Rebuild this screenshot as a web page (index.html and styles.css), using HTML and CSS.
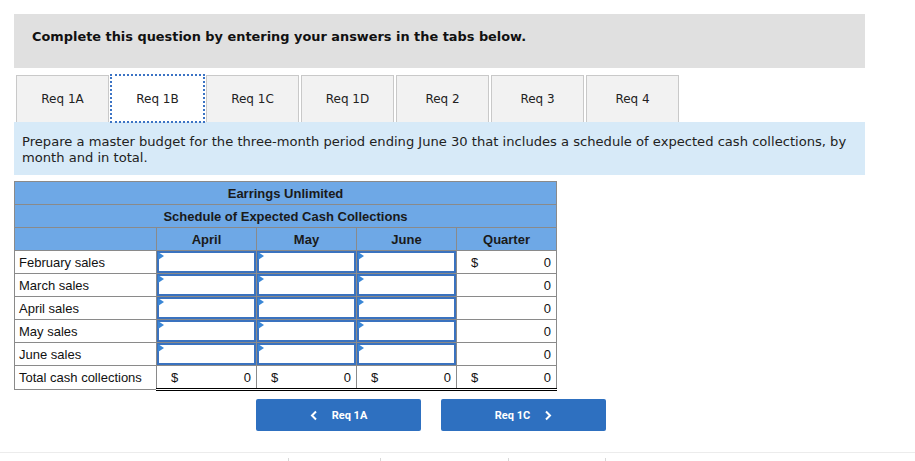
FILE: index.html
```html
<!DOCTYPE html>
<html>
<head>
<meta charset="utf-8">
<link rel="stylesheet" href="styles.css">
</head>
<body>
<div class="page">
  <div class="banner">Complete this question by entering your answers in the tabs below.</div>
  <div class="tabs">
    <div class="tab">Req 1A</div>
    <div class="tab active">Req 1B</div>
    <div class="tab">Req 1C</div>
    <div class="tab">Req 1D</div>
    <div class="tab">Req 2</div>
    <div class="tab">Req 3</div>
    <div class="tab">Req 4</div>
  </div>
  <div class="instr">Prepare a master budget for the three-month period ending June 30 that includes a schedule of expected cash collections, by month and in total.</div>
  <table class="sched">
    <colgroup><col class="c-label"><col class="c-num"><col class="c-num"><col class="c-num"><col class="c-num"></colgroup>
    <tr class="hd"><th colspan="5">Earrings Unlimited</th></tr>
    <tr class="hd"><th colspan="5">Schedule of Expected Cash Collections</th></tr>
    <tr class="hd"><th></th><th>April</th><th>May</th><th>June</th><th>Quarter</th></tr>
    <tr><td class="lbl">February sales</td><td class="in"><div class="box"></div></td><td class="in"><div class="box"></div></td><td class="in"><div class="box"></div></td><td class="val"><span class="dol">$</span><span>0</span></td></tr>
    <tr><td class="lbl">March sales</td><td class="in"><div class="box"></div></td><td class="in"><div class="box"></div></td><td class="in"><div class="box"></div></td><td class="val"><span></span><span>0</span></td></tr>
    <tr><td class="lbl">April sales</td><td class="in"><div class="box"></div></td><td class="in"><div class="box"></div></td><td class="in"><div class="box"></div></td><td class="val"><span></span><span>0</span></td></tr>
    <tr><td class="lbl">May sales</td><td class="in"><div class="box"></div></td><td class="in"><div class="box"></div></td><td class="in"><div class="box"></div></td><td class="val"><span></span><span>0</span></td></tr>
    <tr><td class="lbl">June sales</td><td class="in"><div class="box"></div></td><td class="in"><div class="box"></div></td><td class="in"><div class="box"></div></td><td class="val"><span></span><span>0</span></td></tr>
    <tr class="total"><td class="lbl">Total cash collections</td><td class="val"><span class="dol">$</span><span>0</span></td><td class="val"><span class="dol">$</span><span>0</span></td><td class="val"><span class="dol">$</span><span>0</span></td><td class="val"><span class="dol">$</span><span>0</span></td></tr>
  </table>
  <div class="nav">
    <div class="btn"><svg class="chev" width="8" height="11" viewBox="0 0 8 11"><path d="M6 1.5 L2 5.5 L6 9.5" fill="none" stroke="#fff" stroke-width="2"/></svg><span>Req 1A</span></div>
    <div class="btn"><span>Req 1C</span><svg class="chev" width="8" height="11" viewBox="0 0 8 11"><path d="M2 1.5 L6 5.5 L2 9.5" fill="none" stroke="#fff" stroke-width="2"/></svg></div>
  </div>
</div>
<div class="footer">
  <div class="seg s1"></div><div class="seg s2"></div><div class="seg s3"></div><div class="seg s4"></div><div class="seg s5"></div>
</div>
</body>
</html>
```
FILE: styles.css
```css
html, body { margin: 0; padding: 0; background: #fff; }
body { width: 915px; height: 461px; overflow: hidden; }
.page { padding: 14px 50px 0 14px; }
.banner {
  width: 851px; height: 54px; box-sizing: border-box;
  background: #e0e0e0;
  font-family: "DejaVu Sans", Verdana, sans-serif;
  font-weight: bold; font-size: 12.9px; color: #111;
  padding: 15px 18px 0;
  line-height: 16px;
}
.tabs { display: flex; gap: 2px; margin-top: 7px; padding-left: 2px; height: 47px; }
.tab {
  width: 93px; height: 47px; box-sizing: border-box;
  border: 1px solid #c9c9c9; border-bottom: none;
  background: #f2f2f2;
  font-family: "DejaVu Sans", Verdana, sans-serif; font-size: 12px; color: #222;
  display: flex; align-items: center; justify-content: center;
}
.tab.active { background: #fff; outline: 2px dotted #3b73c4; outline-offset: -1px; border-color: #fff; }
.instr {
  width: 851px; box-sizing: border-box; height: 53px;
  background: #d7eaf8;
  font-family: "DejaVu Sans", Verdana, sans-serif; font-size: 13.1px; color: #222;
  padding: 12px 4px 0 8px; line-height: 16px;
}
.sched {
  margin-top: 6px;
  border-collapse: collapse;
  font-family: "Liberation Sans", Arial, sans-serif; font-size: 13px; color: #111;
  table-layout: fixed; width: 543px;
}
.c-label { width: 142px; }
.c-num { width: 100px; }
.sched th, .sched td { border: 1px solid #8a8a8a; height: 22px; padding: 0; }
.hd th { background: #6ea8e6; font-weight: bold; text-align: center; color: #1a1a1a; }
.lbl { padding-left: 4px !important; }
.in { position: relative; background: #fff; }
.box {
  height: 22px; box-sizing: border-box;
  border: 2px solid #3a72bf; margin: 0;
  position: relative;
}
.box::before {
  content: ""; position: absolute; left: -1px; top: -1px;
  border-left: 6px solid #3a86d6; border-top: 4px solid transparent; border-bottom: 4px solid transparent;
}
.val { padding: 0 5px 0 14px !important; }
.val span { display: inline-block; }
.val span:last-child { float: right; }
.total td { border-top: 1px solid #000; border-bottom: 3px double #000; }
.total .lbl { border-bottom: 1px solid #8a8a8a; }
.nav { display: flex; gap: 20px; margin: 8px 0 0 242px; }
.btn {
  width: 165px; height: 32px; border-radius: 2px;
  background: #2e70c0; color: #fff;
  font-family: Roboto, "Liberation Sans", sans-serif; font-weight: bold; font-size: 11px;
  display: flex; align-items: center; justify-content: center; gap: 14px;
}
.footer {
  position: absolute; left: 0; top: 452px; width: 915px; height: 9px;
  border-top: 1px solid #ececec;
  display: flex; padding-top: 5px; box-sizing: border-box;
}
.seg { height: 4px; border-right: 1px solid #d8d8d8; }
.s1 { width: 288px; }
.s2 { width: 91px; }
.s3 { width: 127px; }
.s4 { width: 96px; }
.s5 { width: 200px; border-right: none; }
```
